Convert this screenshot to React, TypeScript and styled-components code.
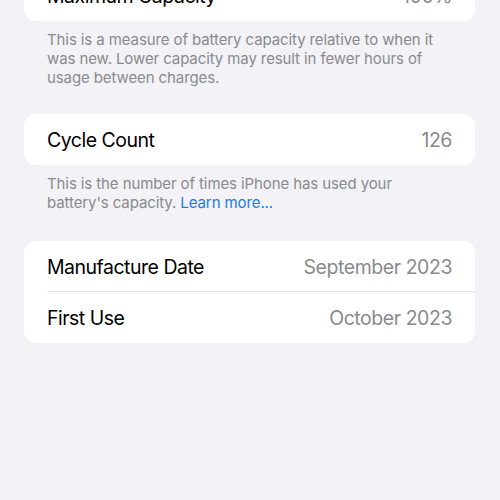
import React from "react";
import styled, { createGlobalStyle } from "styled-components";

const Global = createGlobalStyle`
  html, body { margin: 0; padding: 0; background: #f2f2f7; }
  body { font-family: Inter, "Noto Sans", "Liberation Sans", sans-serif; -webkit-font-smoothing: antialiased; }
`;

const Page = styled.div`
  width: 500px;
  height: 500px;
  overflow: hidden;
  background: #f2f2f7;
  box-sizing: border-box;
  padding: 0 25px 0 24px;
  display: flex;
  flex-direction: column;
`;

const Section = styled.section<{ $offset?: number; $after?: number }>`
  margin-top: ${(p) => p.$offset ?? 0}px;
  margin-bottom: ${(p) => p.$after ?? 0}px;
  display: flex;
  flex-direction: column;
`;

const Card = styled.div`
  background: #ffffff;
  border-radius: 12px;
  overflow: hidden;
  display: flex;
  flex-direction: column;
`;

const Row = styled.div<{ $divider?: boolean }>`
  height: 51px;
  display: flex;
  align-items: center;
  justify-content: space-between;
  padding: 0 23px 0 23px;
  position: relative;
  box-sizing: border-box;
  ${(p) =>
    p.$divider &&
    `&::after {
      content: "";
      position: absolute;
      left: 23px;
      right: 0;
      bottom: 0;
      height: 1px;
      background: #e3e3e8;
    }`}
`;

const Label = styled.span`
  font-size: 19.5px;
  color: #000;
  letter-spacing: -0.5px;
`;

const Value = styled.span`
  font-size: 19.5px;
  color: #8a8a8e;
  letter-spacing: -0.45px;
`;

const Footnote = styled.p`
  margin: 0;
  padding: 9px 20px 0 23px;
  font-size: 15px;
  line-height: 19px;
  color: #8a8a8e;
  letter-spacing: -0.1px;
`;

const Link = styled.a`
  color: #1c7ce0;
  text-decoration: none;
`;

export default function App() {
  return (
    <>
      <Global />
      <Page>
        <Section $offset={-30} $after={27}>
          <Card>
            <Row>
              <Label>Maximum Capacity</Label>
              <Value>100%</Value>
            </Row>
          </Card>
          <Footnote>
            This is a measure of battery capacity relative to when it was new. Lower capacity may
            result in fewer hours of usage between charges.
          </Footnote>
        </Section>
        <Section $after={29}>
          <Card>
            <Row>
              <Label>Cycle Count</Label>
              <Value>126</Value>
            </Row>
          </Card>
          <Footnote>
            This is the number of times iPhone has used your battery's capacity.{" "}
            <Link href="#">Learn more...</Link>
          </Footnote>
        </Section>
        <Section>
          <Card>
            <Row $divider>
              <Label>Manufacture Date</Label>
              <Value>September 2023</Value>
            </Row>
            <Row>
              <Label>First Use</Label>
              <Value>October 2023</Value>
            </Row>
          </Card>
        </Section>
      </Page>
    </>
  );
}
